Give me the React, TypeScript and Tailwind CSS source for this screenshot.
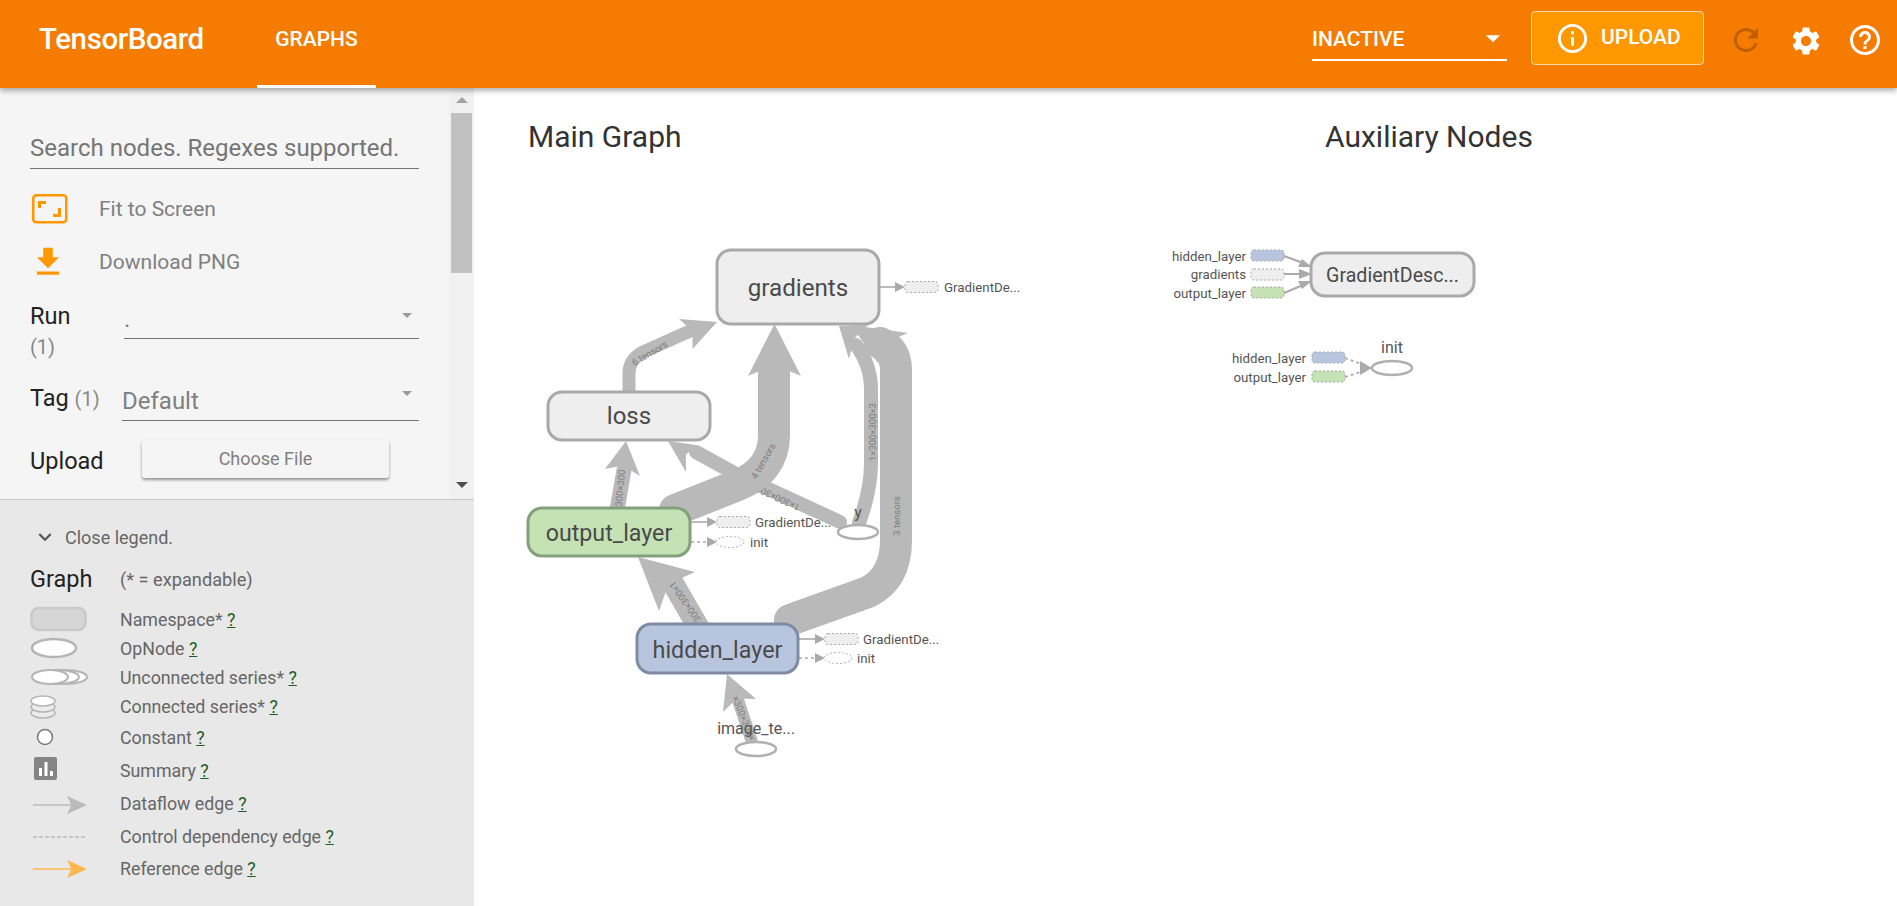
import React from "react";
import { MdSettings, MdRefresh, MdHelpOutline, MdInfoOutline, MdGetApp, MdExpandMore, MdArrowDropDown } from "react-icons/md";

type P = [number, number];
const EDGE = "#b9b9b9";
const pts = (a: P[]) => a.map((p) => p.join(",")).join(" ");

function Head({ tip, a, b, fill = EDGE, notch = 0.22 }: { tip: P; a: P; b: P; fill?: string; notch?: number }) {
  const mx = (a[0] + b[0]) / 2;
  const my = (a[1] + b[1]) / 2;
  const n: P = [mx + (tip[0] - mx) * notch, my + (tip[1] - my) * notch];
  return <polygon points={pts([tip, a, n, b])} fill={fill} />;
}

function Edge({ d, w, tip, a, b }: { d: string; w: number; tip: P; a: P; b: P }) {
  return (
    <g>
      <path d={d} fill="none" stroke={EDGE} strokeWidth={w} strokeLinecap="round" />
      <Head tip={tip} a={a} b={b} />
    </g>
  );
}

function EdgeLabel({ x, y, r, t }: { x: number; y: number; r: number; t: string }) {
  return (
    <text x={x} y={y} transform={`rotate(${r} ${x} ${y})`} textAnchor="middle" dominantBaseline="central" fontSize={9.5} fill="#7d7d7d">
      {t}
    </text>
  );
}

function Node({ x, y, w, h, t, fill = "#eeeeee", stroke = "#a9a9a9", size = 24, ty = 1 }: { x: number; y: number; w: number; h: number; t: string; fill?: string; stroke?: string; size?: number; ty?: number }) {
  return (
    <g>
      <rect x={x} y={y} width={w} height={h} rx={14} fill={fill} stroke={stroke} strokeWidth={3} />
      <text x={x + w / 2} y={y + h / 2 + ty} textAnchor="middle" dominantBaseline="central" fontSize={size} fill="#4a4a4a">
        {t}
      </text>
    </g>
  );
}

function Stub({ x, y, fill = "#eeeeee", w = 33, h = 11 }: { x: number; y: number; fill?: string; w?: number; h?: number }) {
  return <rect x={x} y={y} width={w} height={h} rx={3} fill={fill} stroke="#a8a8a8" strokeWidth={1} strokeDasharray="2 2" />;
}

function Lbl({ x, y, t, end = false, size = 13.3 }: { x: number; y: number; t: string; end?: boolean; size?: number }) {
  return (
    <text x={x} y={y} textAnchor={end ? "end" : "start"} dominantBaseline="central" fontSize={size} fill="#555555">
      {t}
    </text>
  );
}

function SideOut({ x0, y, rectX, label, labelX }: { x0: number; y: number; rectX: number; label: string; labelX: number }) {
  return (
    <g>
      <line x1={x0} y1={y} x2={rectX - 8} y2={y} stroke="#aaaaaa" strokeWidth={1.6} />
      <polygon points={pts([[rectX, y], [rectX - 10, y - 5], [rectX - 10, y + 5]])} fill="#aaaaaa" />
      <Stub x={rectX} y={y - 5.5} />
      <Lbl x={labelX} y={y} t={label} />
    </g>
  );
}

function SideInit({ x0, y, cx, labelX }: { x0: number; y: number; cx: number; labelX: number }) {
  return (
    <g>
      <line x1={x0} y1={y} x2={cx - 22} y2={y} stroke="#aaaaaa" strokeWidth={1.6} strokeDasharray="3 3" />
      <polygon points={pts([[cx - 13, y], [cx - 23, y - 5], [cx - 23, y + 5]])} fill="#aaaaaa" />
      <ellipse cx={cx} cy={y} rx={14} ry={5.5} fill="#ffffff" stroke="#b0b0b0" strokeWidth={1} strokeDasharray="2 2" />
      <Lbl x={labelX} y={y} t="init" />
    </g>
  );
}

function GraphCanvas() {
  return (
    <svg className="absolute left-0 top-0 block" width={1423} height={818} viewBox="474 88 1423 818">
      <Edge d="M840 522 L734 473 L696 452" w={14} tip={[668, 441]} a={[696, 445]} b={[686, 472]} />
      <EdgeLabel x={773} y={496} r={205} t="1×300×300×1" />
      <Edge d="M675 510 L738 485 Q774 470 774 435 L774 368" w={32} tip={[774.5, 324]} a={[748, 376]} b={[801, 376]} />
      <EdgeLabel x={763} y={461} r={-60} t="4 tensors" />
      <Edge d="M629 395 L629 373 Q629 360 643 352 L690 331" w={13} tip={[717, 322]} a={[679, 319]} b={[692.5, 349]} />
      <EdgeLabel x={649.5} y={353} r={-30} t="6 tensors" />
      <Edge d="M617 510 L624 470" w={15} tip={[626, 441]} a={[605, 469]} b={[640, 476]} />
      <EdgeLabel x={620} y={488} r={-85} t="300×300" />
      <Edge d="M859 523 Q871 490 871 463 L871 390 Q871 365 856 345" w={14} tip={[839, 326]} a={[849, 359]} b={[868, 325]} />
      <EdgeLabel x={872} y={432} r={-90} t="1×300×300×3" />
      <Edge d="M790 620 L868 592 Q896 578 896 540 L896 370 Q896 350 880 343" w={32} tip={[851, 325]} a={[908, 333]} b={[878, 363]} />
      <EdgeLabel x={896} y={516} r={-90} t="3 tensors" />
      <Edge d="M700 630 L671 580" w={22} tip={[638, 557]} a={[695, 572]} b={[659, 611]} />
      <EdgeLabel x={685} y={602} r={235} t="300×300×1" />
      <Edge d="M752 742 L738 700" w={12} tip={[727, 674]} a={[756, 699]} b={[723, 712]} />
      <EdgeLabel x={744} y={718} r={68} t="×300×300×" />

      <SideOut x0={880} y={287} rectX={905} label="GradientDe..." labelX={944} />
      <SideOut x0={691} y={522} rectX={717} label="GradientDe..." labelX={755} />
      <SideInit x0={691} y={542} cx={730} labelX={750} />
      <SideOut x0={799} y={639} rectX={825} label="GradientDe..." labelX={863} />
      <SideInit x0={799} y={658} cx={838} labelX={857} />

      <Node x={717} y={250} w={162} h={74} t="gradients" size={24.2} />
      <Node x={548} y={392} w={162} h={48} t="loss" ty={0} />
      <Node x={528} y={508} w={162} h={48} t="output_layer" size={23.2} fill="#c5e2b5" stroke="#84a07a" />
      <Node x={637} y={624} w={161} h={49} t="hidden_layer" size={23.3} fill="#b8c5de" stroke="#7f8ba4" />

      <ellipse cx={858} cy={532} rx={20} ry={7} fill="#ffffff" stroke="#b0b0b0" strokeWidth={2.5} />
      <text x={858} y={512} textAnchor="middle" dominantBaseline="central" fontSize={16} fill="#555555">y</text>
      <ellipse cx={756} cy={749} rx={20} ry={7} fill="#ffffff" stroke="#b0b0b0" strokeWidth={2.5} />
      <text x={756} y={728} textAnchor="middle" dominantBaseline="central" fontSize={16} fill="#555555">image_te...</text>

      {/* Auxiliary nodes */}
      <g stroke="#aaaaaa" strokeWidth={2}>
        <line x1={1284} y1={256} x2={1303} y2={263} />
        <line x1={1284} y1={274} x2={1300} y2={274} />
        <line x1={1284} y1={293} x2={1303} y2={285} />
      </g>
      <polygon points={pts([[1312, 267], [1298, 267], [1302, 259]])} fill="#aaaaaa" />
      <polygon points={pts([[1312, 274], [1299, 269], [1299, 279]])} fill="#aaaaaa" />
      <polygon points={pts([[1312, 281], [1298, 281], [1302, 289]])} fill="#aaaaaa" />
      <Stub x={1251} y={250} fill="#b8c5de" />
      <Stub x={1251} y={269} />
      <Stub x={1251} y={287} fill="#c5e2b5" />
      <Lbl x={1246} y={256} t="hidden_layer" end />
      <Lbl x={1246} y={274} t="gradients" end />
      <Lbl x={1246} y={293} t="output_layer" end />
      <Node x={1311} y={253} w={163} h={43} t="GradientDesc..." size={19.6} />

      <g stroke="#aaaaaa" strokeWidth={1.8} strokeDasharray="3 3">
        <line x1={1345} y1={358} x2={1364} y2={365} />
        <line x1={1345} y1={377} x2={1364} y2={371} />
      </g>
      <polygon points={pts([[1372, 368], [1360, 361], [1360, 375]])} fill="#aaaaaa" />
      <Stub x={1312} y={352} fill="#b8c5de" />
      <Stub x={1312} y={371} fill="#c5e2b5" />
      <Lbl x={1306} y={358} t="hidden_layer" end />
      <Lbl x={1306} y={377} t="output_layer" end />
      <ellipse cx={1392} cy={368} rx={20} ry={7} fill="#ffffff" stroke="#b0b0b0" strokeWidth={2.5} />
      <text x={1392} y={347} textAnchor="middle" dominantBaseline="central" fontSize={16} fill="#555555">init</text>
    </svg>
  );
}

function FitIcon() {
  return (
    <svg width={37} height={30} viewBox="0 0 37 30" className="block">
      <rect x={1.25} y={1.25} width={33} height={27} rx={3} fill="none" stroke="#ff9800" strokeWidth={2.5} />
      <path d="M6 7 H14 V10 H9 V14 H6 Z M29 23 H21 V20 H26 V14 H29 Z" fill="#ff9800" />
    </svg>
  );
}

const legendIcons: Record<string, React.ReactNode> = {
  ns: <rect x={1.5} y={2} width={54} height={22} rx={7} fill="#d6d6d6" stroke="#c9c9c9" strokeWidth={2.5} />,
  op: <ellipse cx={24} cy={12} rx={22} ry={9} fill="#ffffff" stroke="#b5b5b5" strokeWidth={2.5} />,
  un: (
    <g fill="#ffffff" stroke="#b5b5b5" strokeWidth={2}>
      <ellipse cx={35} cy={13} rx={22} ry={7} />
      <ellipse cx={27} cy={13} rx={22} ry={7} />
      <ellipse cx={20} cy={13} rx={18} ry={7} />
    </g>
  ),
  co: (
    <g fill="#ececec" stroke="#b5b5b5" strokeWidth={1.5}>
      <ellipse cx={13} cy={20} rx={12} ry={5} />
      <ellipse cx={13} cy={14} rx={12} ry={5} />
      <ellipse cx={13} cy={8} rx={12} ry={5} fill="#ffffff" />
    </g>
  ),
  cn: <circle cx={15} cy={13} r={7.5} fill="#ffffff" stroke="#777777" strokeWidth={1.5} />,
  su: (
    <g>
      <rect x={4} y={0} width={23} height={23} rx={2} fill="#848484" />
      <path d="M9 11h3v8H9z M14.500 5h3v14h-3z M20 14h3v5h-3z" fill="#ffffff" />
    </g>
  ),
  df: (
    <g>
      <line x1={3} y1={14} x2={42} y2={14} stroke="#bbbbbb" strokeWidth={1.5} />
      <Head tip={[57, 14]} a={[37, 5]} b={[37, 23]} fill="#bbbbbb" />
    </g>
  ),
  cd: <line x1={3} y1={14} x2={57} y2={14} stroke="#bbbbbb" strokeWidth={1.5} strokeDasharray="4 2" />,
  re: (
    <g>
      <line x1={3} y1={14} x2={42} y2={14} stroke="#ffb74d" strokeWidth={1.5} />
      <Head tip={[57, 14]} a={[37, 5]} b={[37, 23]} fill="#ffb74d" />
    </g>
  ),
};

const legend = [
  { k: "ns", t: "Namespace*", rowH: "h-[30px]" },
  { k: "op", t: "OpNode", rowH: "h-[29px]" },
  { k: "un", t: "Unconnected series*", rowH: "h-[28px]" },
  { k: "co", t: "Connected series*", rowH: "h-[30px]" },
  { k: "cn", t: "Constant", rowH: "h-[32px]" },
  { k: "su", t: "Summary", rowH: "h-[34px]" },
  { k: "df", t: "Dataflow edge", rowH: "h-[33px]" },
  { k: "cd", t: "Control dependency edge", rowH: "h-[32px]" },
  { k: "re", t: "Reference edge", rowH: "h-[32px]" },
];

function SelectLine({ children, cls }: { children: React.ReactNode; cls: string }) {
  return (
    <div className={`relative flex items-center border-b border-[#757575] ${cls}`}>
      {children}
      <MdArrowDropDown className="absolute right-0 top-[3px] text-[#9a9a9a]" size={24} />
    </div>
  );
}

export default function App() {
  return (
    <div className="flex h-[906px] w-[1897px] flex-col overflow-hidden bg-white font-[family-name:Roboto,sans-serif]">
      <header className="relative z-10 flex h-[88px] shrink-0 items-start bg-[#f57c00] text-white shadow-[0_3px_5px_rgba(0,0,0,0.3)]">
        <div className="mt-[19px] ml-[39px] w-[218px] text-[29.500px] leading-[40px] font-medium tracking-[-0.4px]">TensorBoard</div>
        <div className="flex h-[88px] w-[119px] items-start justify-center border-b-[3px] border-white pt-[26px] text-[21px] leading-[26px] font-medium">GRAPHS</div>
        <div className="flex-1" />
        <div className="relative mt-[24px] mr-[24px] flex h-[37px] w-[195px] items-start border-b-2 border-white pt-[2px] text-[21px] leading-[26px] font-medium">
          INACTIVE
          <MdArrowDropDown className="absolute right-[-3px] top-[-3px]" size={34} />
        </div>
        <div className="mt-[11px] flex h-[54px] w-[173px] items-center rounded-[4px] border border-[#ffd9a8] bg-[#ff9800] pl-[23px] text-[21px] font-medium">
          <MdInfoOutline size={35} />
          <span className="ml-[11px]">UPLOAD</span>
        </div>
        <MdRefresh className="mt-[22px] ml-[24px] text-[#bf5f00]" size={36} />
        <MdSettings className="mt-[24px] ml-[25px]" size={34} />
        <MdHelpOutline className="mt-[22px] ml-[24px] mr-[14px]" size={36} />
      </header>
      <div className="flex min-h-0 flex-1">
        <aside className="flex w-[474px] shrink-0 flex-col">
          <div className="flex h-[412px] shrink-0 border-b border-[#c8c8c8] bg-[#f5f5f5]">
            <div className="flex w-[449px] shrink-0 flex-col pt-[39px] pl-[30px] pr-[30px]">
              <div className="flex h-[42px] shrink-0 items-center border-b border-[#757575] text-[24px] text-[#757575]">Search nodes. Regexes supported.</div>
              <div className="mt-[18px] flex h-[44px] shrink-0 items-center text-[21px] text-[#808080]">
                <div className="ml-[2px] w-[67px]"><FitIcon /></div>
                <span className="pt-[2px]">Fit to Screen</span>
              </div>
              <div className="mt-[10px] flex h-[44px] shrink-0 items-center text-[21px] text-[#808080]">
                <div className="w-[69px] text-[#ff9800]"><MdGetApp size={38} className="-mt-[2px] ml-[-1px]" /></div>
                Download PNG
              </div>
              <div className="mt-[15px] flex h-[69px] shrink-0 items-start">
                <div className="w-[94px] pt-[1px] text-[23.500px] leading-[30px] text-[#222222]">
                  Run
                  <div className="pt-[1px] text-[20px] leading-[30px] text-[#888888]">(1)</div>
                </div>
                <SelectLine cls="h-[39px] flex-1 text-[24px] text-[#808080]"><span className="leading-[44px]">.</span></SelectLine>
              </div>
              <div className="mt-[9px] flex h-[44px] shrink-0 items-start">
                <div className="w-[92px] pt-[1px] text-[23.500px] leading-[38px] text-[#222222]">
                  Tag <span className="text-[20px] text-[#888888]">(1)</span>
                </div>
                <SelectLine cls="h-[43px] flex-1 text-[24px] text-[#808080]"><span className="pt-[4px]">Default</span></SelectLine>
              </div>
              <div className="mt-[18px] flex h-[38px] shrink-0 items-center">
                <div className="w-[112px] pt-[6px] text-[23.500px] text-[#222222]">Upload</div>
                <div className="flex h-[38px] w-[247px] items-center justify-center rounded-[3px] bg-[#f5f5f5] pb-[2px] text-[18px] text-[#808080] shadow-[0_2px_3px_rgba(0,0,0,0.4)]">Choose File</div>
              </div>
            </div>
            <div className="relative flex w-[25px] shrink-0 flex-col items-center bg-[#f1f1f1]">
              <div className="mt-[9px] h-0 w-0 border-x-[6px] border-b-[6px] border-x-transparent border-b-[#a3a3a3]" />
              <div className="mt-[10px] h-[160px] w-[21px] bg-[#c1c1c1]" />
              <div className="mt-[209px] h-0 w-0 border-x-[6px] border-t-[6px] border-x-transparent border-t-[#505050]" />
            </div>
          </div>
          <div className="flex-1 bg-[#e8e8e8] pl-[30px] text-[17.800px] text-[#666666]">
            <div className="mt-[22px] flex h-[30px] items-center">
              <MdExpandMore size={26} className="ml-[2px] text-[#555555]" />
              <span className="ml-[7px] text-[18px]">Close legend.</span>
            </div>
            <div className="mt-[9px] flex h-[38px] items-center">
              <span className="w-[90px] text-[23.500px] text-[#222222]">Graph</span>
              <span className="text-[18.200px]">(* = expandable)</span>
            </div>
            <div className="mt-[6px]">
              {legend.map((r) => (
                <div key={r.k} className={`flex items-center ${r.rowH}`}>
                  <svg width={90} height={28} viewBox="0 0 90 28" className="block shrink-0 overflow-visible">
                    {legendIcons[r.k]}
                  </svg>
                  <span>
                    {r.t} <span className="text-[#1b5e20] underline">?</span>
                  </span>
                </div>
              ))}
            </div>
          </div>
        </aside>
        <main className="relative flex-1 bg-white">
          <GraphCanvas />
          <div className="absolute left-[54px] top-[32px] flex text-[30px] leading-[34px] text-[#333333]">
            <div className="w-[797px]">Main Graph</div>
            <div>Auxiliary Nodes</div>
          </div>
        </main>
      </div>
    </div>
  );
}
